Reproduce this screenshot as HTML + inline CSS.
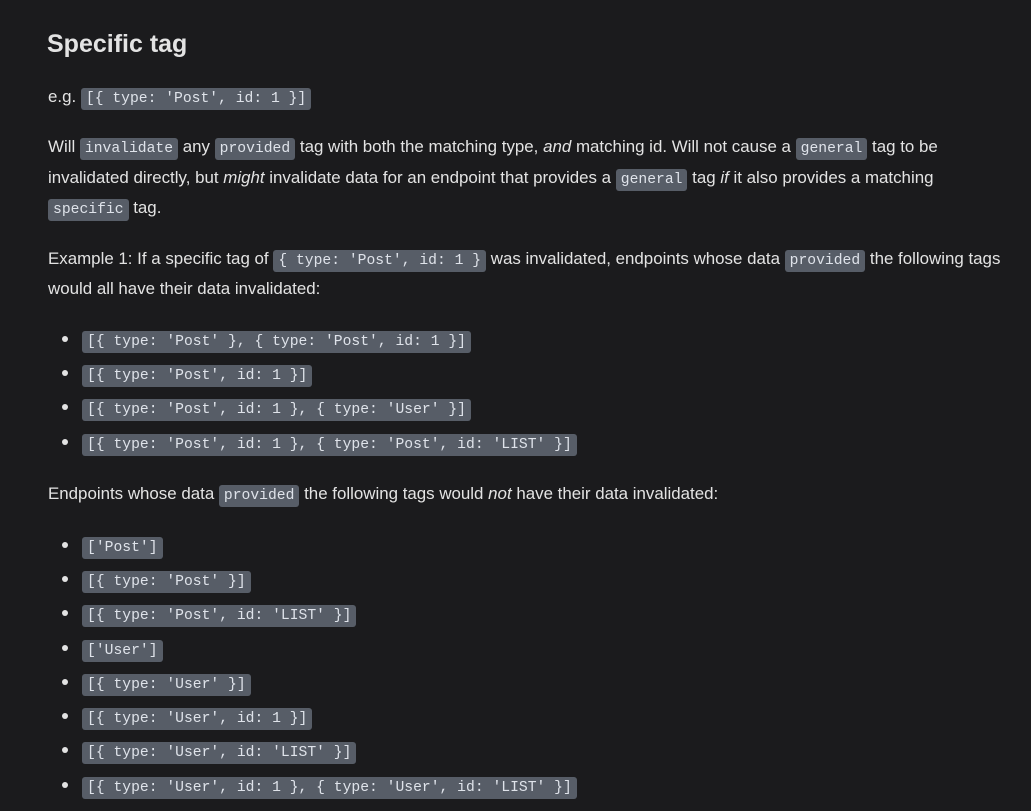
<!DOCTYPE html>
<html><head><meta charset="utf-8"><style>
html,body{margin:0;padding:0;background:#1b1b1d;width:1031px;height:811px;overflow:hidden}
body{font-family:"Liberation Sans",sans-serif;color:#e3e3e3;font-size:16.9px;position:relative}
.l{position:absolute;left:48px;white-space:nowrap;line-height:24px}
h2{position:absolute;left:47px;top:27px;margin:0;font-size:25px;font-weight:bold;color:#e3e3e3;line-height:34px}
code{font-family:"Liberation Mono",monospace;font-size:14.7px;background:#575d67;color:#dfe3ea;border-radius:3px;padding:3px 5px;border:0}
.li{position:absolute;left:82px;white-space:nowrap;line-height:24px}
.b{position:absolute;left:62px;width:6px;height:6px;border-radius:50%;background:#e3e3e3}
</style></head><body>
<h2>Specific tag</h2>
<div class="l" style="top:85px">e.g. <code>[{ type: 'Post', id: 1 }]</code></div>
<div class="l" style="top:135px">Will <code>invalidate</code> any <code>provided</code> tag with both the matching type, <i>and</i> matching id. Will not cause a <code>general</code> tag to be</div>
<div class="l" style="top:166px">invalidated directly, but <i>might</i> invalidate data for an endpoint that provides a <code>general</code> tag <i>if</i> it also provides a matching</div>
<div class="l" style="top:196px"><code>specific</code> tag.</div>
<div class="l" style="top:247px">Example 1: If a specific tag of <code>{ type: 'Post', id: 1 }</code> was invalidated, endpoints whose data <code>provided</code> the following tags</div>
<div class="l" style="top:277px">would all have their data invalidated:</div>

<div class="b" style="top:336px"></div><div class="li" style="top:328px"><code>[{ type: 'Post' }, { type: 'Post', id: 1 }]</code></div>
<div class="b" style="top:370px"></div><div class="li" style="top:362px"><code>[{ type: 'Post', id: 1 }]</code></div>
<div class="b" style="top:404px"></div><div class="li" style="top:396px"><code>[{ type: 'Post', id: 1 }, { type: 'User' }]</code></div>
<div class="b" style="top:439px"></div><div class="li" style="top:431px"><code>[{ type: 'Post', id: 1 }, { type: 'Post', id: 'LIST' }]</code></div>

<div class="l" style="top:482px">Endpoints whose data <code>provided</code> the following tags would <i>not</i> have their data invalidated:</div>

<div class="b" style="top:542px"></div><div class="li" style="top:534px"><code>['Post']</code></div>
<div class="b" style="top:576px"></div><div class="li" style="top:568px"><code>[{ type: 'Post' }]</code></div>
<div class="b" style="top:610px"></div><div class="li" style="top:602px"><code>[{ type: 'Post', id: 'LIST' }]</code></div>
<div class="b" style="top:645px"></div><div class="li" style="top:637px"><code>['User']</code></div>
<div class="b" style="top:679px"></div><div class="li" style="top:671px"><code>[{ type: 'User' }]</code></div>
<div class="b" style="top:713px"></div><div class="li" style="top:705px"><code>[{ type: 'User', id: 1 }]</code></div>
<div class="b" style="top:747px"></div><div class="li" style="top:739px"><code>[{ type: 'User', id: 'LIST' }]</code></div>
<div class="b" style="top:782px"></div><div class="li" style="top:774px"><code>[{ type: 'User', id: 1 }, { type: 'User', id: 'LIST' }]</code></div>
</body></html>
